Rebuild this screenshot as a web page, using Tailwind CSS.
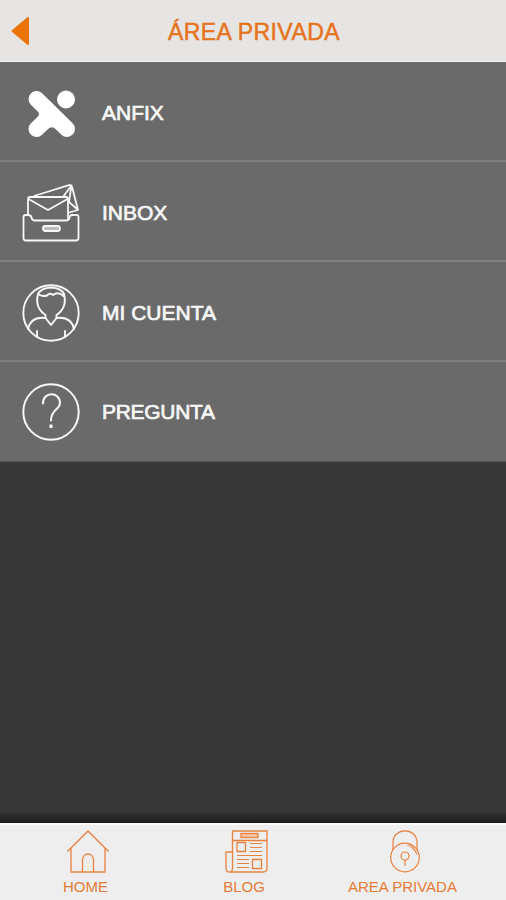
<!doctype html>
<html lang="es">
<head>
    <meta charset="utf-8">
    <meta name="viewport" content="width=device-width, initial-scale=1.0">
    <title>Área privada</title>
    <script src="https://cdn.jsdelivr.net/npm/@tailwindcss/browser@4"></script>
</head>
<body class="bg-[#373737] font-['Liberation_Sans',sans-serif]">
<div class="flex flex-col h-[900px] w-[506px] overflow-hidden">
    <header class="grid grid-cols-[80px_1fr_80px] items-center h-[62px] shrink-0 bg-[#e6e5e3] border-b border-[#f1f1ef]">
        <a href="#" aria-label="Volver" class="pl-[11px]">
            <svg class="block w-5 h-7" viewBox="0 0 20 28">
                <path d="M1.500 14 17 1v26z" fill="#ec7404" stroke="#ec7404" stroke-width="2" stroke-linejoin="round"/>
            </svg>
        </a>
        <h1 class="text-center text-[23px] leading-7 tracking-[0.4px] whitespace-nowrap text-[#e67320] [-webkit-text-stroke:0.5px_#e67320] pl-0.5 pt-0.5">ÁREA PRIVADA</h1>
    </header>

    <main class="flex-1 flex flex-col">
        <nav class="text-[21px] text-[#f7f7f7] [-webkit-text-stroke:0.7px_#f7f7f7]">
            <a href="#" class="flex items-center gap-[22px] h-[100px] pt-[3px] pl-[22px] bg-[#6a6a6a] border-b-2 border-[#7f7f7f]">
                <svg class="w-[58px] h-[58px]" viewBox="0 0 58 58" fill="#fff">
                    <path d="M14.500 15 45 45M14.500 45 28 32" stroke="#fff" stroke-width="16" stroke-linecap="round"/>
                    <path d="M15 26q4 4 0 8L21 30zM25 45.500q4.750-4.500 9.500 0L29.750 38z"/>
                    <circle cx="44" cy="15.500" r="9"/>
                </svg>
                <span>ANFIX</span>
            </a>
            <a href="#" class="flex items-center gap-[22px] h-[100px] pt-[3px] pl-[22px] bg-[#6a6a6a] border-b-2 border-[#7f7f7f]">
                <svg class="w-[58px] h-[58px]" viewBox="0 0 58 58" fill="none" stroke="#f7f7f7" stroke-width="1.800" stroke-linejoin="round" stroke-linecap="round">
                    <path d="M6 30V15q0-2 2-2H44q2 0 2 2V34M6.500 15 26 26 45.500 15"/>
                    <path d="M12 12 47 1.200q2.500-.700 3 1.500L56 26 47 28.500M49 2 41 13M49 4 47 18 55 25"/>
                    <path d="M6 31H3.500Q1.500 31 1.500 33V54q0 2.500 2.500 2.500H54q2.500 0 2.500-2.500V33q0-2-2-2H50q-2 0-2.500 2.500Q47 36.500 44 36.500H13q-3 0-3.500-3Q9 31 6 31z"/>
                    <rect x="21" y="42" width="17" height="5" rx="2.500" fill="#bbb"/>
                </svg>
                <span>INBOX</span>
            </a>
            <a href="#" class="flex items-center gap-[22px] h-[100px] pt-[3px] pl-[22px] bg-[#6a6a6a] border-b-2 border-[#7f7f7f]">
                <svg class="w-[58px] h-[58px]" viewBox="0 0 58 58" fill="none" stroke="#f7f7f7" stroke-width="1.900" stroke-linejoin="round" stroke-linecap="round">
                    <circle cx="29" cy="29" r="27.700"/>
                    <path d="M16 10Q19 4 29 3.500 39 4 42 10M16.500 10.500Q21 13 25 11.500 28 8.500 31 11 36 7 41.500 12"/>
                    <path d="M16 10C14 18 16 26 23.500 31V34L29 41 34.500 34V31C42 26 44 18 42 10"/>
                    <path d="M23.500 34Q9 32 6 45M34.500 34Q49 32 52 45M15 47V53M43 47V53"/>
                </svg>
                <span>MI CUENTA</span>
            </a>
            <a href="#" class="flex items-center gap-[22px] h-[100px] pt-px pl-[22px] bg-[#6a6a6a] border-b border-[#555]">
                <svg class="w-[58px] h-[58px]" viewBox="0 0 58 58" fill="none" stroke="#f7f7f7" stroke-width="2">
                    <circle cx="29" cy="29" r="27.700"/>
                    <path d="M21 20.500C21 8 38 8.500 38 20 38 27 29 26 29 37.500" stroke-linecap="round"/>
                    <path d="M29 41.500V45" stroke-width="3"/>
                </svg>
                <span class="tracking-[-0.3px]">PREGUNTA</span>
            </a>
        </nav>
        <div class="mt-auto h-3 bg-linear-to-b from-[#373737] to-[#1d1d1d]"></div>
    </main>

    <!-- tab bar -->
    <footer class="flex h-[77px] shrink-0 bg-[#eeeeee] border-t-2 border-[#fafafa] text-[15px] leading-4 text-[#e67a35]">
        <a href="#" class="flex flex-col items-center w-[171px] pt-1">
            <svg class="ml-[5px] w-[44px] h-[46px]" viewBox="0 0 44 46" fill="none" stroke="#e8833f" stroke-width="1.300">
                <path d="M1.500 22.500 22 2 42.500 22.500M5 19V43H39V19"/>
                <path d="M16.500 43V31c0-8 11-8 11 0V43"/>
            </svg>
            <span class="mt-1">HOME</span>
        </a>
        <a href="#" class="flex flex-col items-center w-[146px] pt-1">
            <svg class="ml-[3px] w-[44px] h-[46px]" viewBox="0 0 44 46" fill="none" stroke="#e8833f" stroke-width="1.300">
                <path d="M8.500 23V2H43V39q0 4-4 4H5.500Q2 43 2 39V23H8.500V39q0 4-3 4M8.500 11.500H43"/>
                <rect x="17" y="4.500" width="17" height="4" fill="#f5c7a9"/>
                <path d="M13 13.500H21.500V22.500H13zM28.500 30.500H37.500V39.500H28.500z"/>
                <path d="M26 14.500H38M26 18.500H38M26 22.500H38M13 26.500H38M13 30.500H25M13 34.500H25M13 38.500H25" stroke-width="1.200"/>
            </svg>
            <span class="mt-1">BLOG</span>
        </a>
        <a href="#" class="flex flex-col items-center w-[171px] pt-1">
            <svg class="ml-[5px] w-[44px] h-[46px]" viewBox="0 0 44 46" fill="none" stroke="#e8833f" stroke-width="1.200">
                <circle cx="22" cy="28.500" r="14.300"/>
                <path d="M10 21V13.500c0-15.500 24-15.500 24 0V21"/>
                <path d="M24 16Q31 18 34 26M26 15 33 23M29 16 34 25" stroke-width=".800"/>
                <circle cx="22" cy="27" r="4"/>
                <path d="M22 31V37"/>
            </svg>
            <span class="mt-1 whitespace-nowrap">AREA PRIVADA</span>
        </a>
    </footer>
</div>
</body>
</html>
